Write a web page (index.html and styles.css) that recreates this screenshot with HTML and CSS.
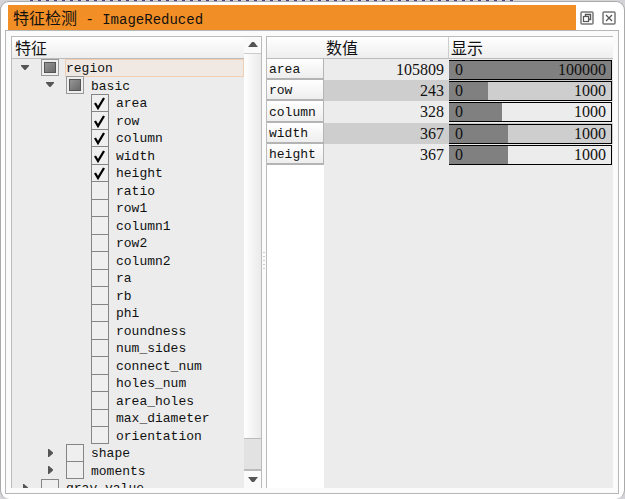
FILE: index.html
```html
<!DOCTYPE html>
<html lang="zh-CN">
<head>
<meta charset="utf-8">
<title>特征检测 - ImageReduced</title>
<link rel="stylesheet" href="styles.css">
</head>
<body>
<section class="window">
  <header class="titlebar">
    <h1 class="title"><span class="cjk">特征检测</span> - ImageReduced</h1>
    <div class="window-buttons">
      <button type="button" class="window-button" aria-label="Float"><svg viewBox="0 0 14 14"><rect x="1" y="1" width="12" height="12" rx="1" fill="#fff" stroke="#777" stroke-width="1.5"/><path d="M5.500 5V3.500h5v5H9" fill="none" stroke="#555" stroke-width="1.4"/><rect x="3.500" y="5.500" width="5" height="5" fill="#fff" stroke="#555" stroke-width="1.2"/></svg></button>
      <button type="button" class="window-button" aria-label="Close"><svg viewBox="0 0 14 14"><rect x="1" y="1" width="12" height="12" rx="1" fill="#fff" stroke="#777" stroke-width="1.5"/><path d="M4 4l6 6M10 4l-6 6" stroke="#555" stroke-width="1.3"/></svg></button>
    </div>
  </header>
  <main class="content">
    <section class="features">
      <div class="tree-pane">
        <h2 class="head">特征</h2>
        <ul class="tree" id="tree"></ul>
      </div>
      <div class="scrollbar">
        <button type="button" class="scroll-button" aria-label="Scroll up"><svg viewBox="0 0 10 6"><path d="M0 5L4 0h2l4 5z" fill="#555"/></svg></button>
        <div class="track"><div class="thumb"></div></div>
        <button type="button" class="scroll-button down" aria-label="Scroll down"><svg viewBox="0 0 10 6"><path d="M0 0h10L6 5H4z" fill="#555"/></svg></button>
      </div>
    </section>
    <div class="splitter"></div>
    <section class="values">
      <table>
        <colgroup><col class="col-name"><col class="col-value"><col></colgroup>
        <thead><tr><th></th><th scope="col">数值</th><th scope="col">显示</th></tr></thead>
        <tbody id="values"></tbody>
      </table>
    </section>
  </main>
</section>
<script src="script.js"></script>
</body>
</html>
```
FILE: styles.css
```css
* { box-sizing: border-box; }
body {
  margin: 0;
  height: 100vh;
  padding-top: 1px;
  background:
    repeating-linear-gradient(90deg, #44448c 0 3px, #d4d4d8 3px 8px) 30px 0 / 78% 1px no-repeat,
    #d4d4d8;
  color: #111;
  font: 13px/17px "Liberation Mono", "Noto Sans CJK SC", monospace;
  overflow: hidden;
}
h1, h2, ul { margin: 0; padding: 0; font-weight: normal; }
button { padding: 0; border: 0; background: none; }
svg { display: block; }
.window {
  display: flex;
  flex-direction: column;
  height: 100%;
  padding: 3px 5px 5px 4px;
  border: 1px solid #aaa;
  border-bottom: 0;
  border-radius: 9px;
  background: #fff;
}
.titlebar { display: flex; height: 25px; padding-left: 3px; }
.title {
  flex: 1;
  padding-left: 5px;
  background: #f28e26;
  font-size: 14px;
  line-height: 25px;
  white-space: pre;
}
.cjk { font-size: 16px; font-family: "Noto Sans CJK SC", sans-serif; }
.window-buttons {
  display: flex;
  align-items: center;
  gap: 8px;
  padding: 0 3px 0 4px;
}
.window-button { width: 14px; height: 14px; }
.content {
  display: flex;
  flex: 1;
  min-height: 0;
  padding: 5px;
  border: 1px solid #b4b8ba;
  background: #fbfbfb;
}
.features {
  display: flex;
  flex: 0 0 251px;
  border: 1px solid #bbb;
  border-bottom: 0;
  background: #ececec;
}
.tree-pane { display: flex; flex: 1; flex-direction: column; min-width: 0; }
.head, thead th {
  height: 22px;
  border-bottom: 1px solid #bbb;
  background: linear-gradient(#fff, #eee);
  font: 16px/21px "Noto Sans CJK SC", sans-serif;
  text-align: left;
}
.head { flex: none; padding-left: 3px; }
.tree { flex: 1; min-height: 0; list-style: none; overflow: hidden; }
.item {
  display: flex;
  align-items: center;
  height: 17px;
  padding-left: 5px;
}
.item:nth-child(even) { height: 18px; }
.level-1 { padding-left: 30px; }
.level-2 { padding-left: 55px; }
.arrow { display: grid; place-items: center; width: 16px; margin-right: 8px; }
.arrow svg { width: 8px; height: 8px; }
.check {
  appearance: none;
  flex: none;
  align-self: stretch;
  width: 18px;
  margin: 0 6px 0 0;
  border: 1px solid #858585;
  border-bottom-width: 0;
  background: #efefef center / 12px 14px no-repeat;
}
.check.last { border-bottom-width: 1px; }
.check:checked { background-image: url('data:image/svg+xml,<svg xmlns="http://www.w3.org/2000/svg" viewBox="0 0 12 14"><path d="M1 7l3 5L10 2" fill="none" stroke="black" stroke-width="2.3"/></svg>'); }
.check:indeterminate {
  border: 1px solid #999;
  background: linear-gradient(135deg, #999, #666) content-box, #eee;
  padding: 2px;
  box-shadow: inset 0 0 0 2px #eee, inset 0 0 0 3px #555;
}
.label { flex: 1; padding: 2px 0 0 1px; line-height: 17px; }
.selected { padding: 1px 0 0; border: 1px solid #f1cfb5; background: #f0e8e3; line-height: 15px; }
.scrollbar {
  display: flex;
  flex-direction: column;
  width: 17px;
  background: #fafafa;
}
.scroll-button { display: grid; place-items: center; height: 17px; border-bottom: 1px solid #ccc; }
.scroll-button.down { border: 0; }
.scroll-button svg { width: 10px; height: 6px; }
.track {
  display: flex;
  flex: 1;
  flex-direction: column;
  justify-content: flex-end;
  background: linear-gradient(90deg, #fff, #eaeaea);
}
.thumb { height: 8%; border: 1px solid #bbb; border-width: 1px 0 2px; background: #e2e2e2; }
.splitter {
  width: 4px;
  background: repeating-linear-gradient(#ccc 0 1px, transparent 1px 4px) center / 2px 20px no-repeat;
}
.values {
  flex: 1;
  border: solid #bbb;
  border-width: 1px 0 0 1px;
  background: linear-gradient(90deg, #fff 57px, #ececec 57px);
}
table { width: 100%; table-layout: fixed; border-collapse: separate; border-spacing: 0; }
.col-name { width: 57px; }
.col-value { width: 124px; }
th, td { padding: 0; }
thead th { padding-left: 2px; }
thead th:last-child { border-left: 1px solid #ccc; }
tbody tr { height: 21px; }
tbody tr:nth-child(3n) { height: 22px; }
tbody tr:nth-child(even) td { background: #cecece; }
tbody th {
  padding: 2px 0 0 2px;
  border: solid #b4b4b4;
  border-width: 0 1px 2px 0;
  background: linear-gradient(#fff, #eee);
  font-weight: normal;
  text-align: left;
}
.number, .bar { font: 16px/18px "Liberation Serif", serif; }
.number { padding-right: 4px; text-align: right; }
.bar {
  display: flex;
  justify-content: space-between;
  height: 20px;
  margin: 0 1px;
  padding: 0 5px 0 6px;
  border: solid #000;
  border-width: 1px 1px 1px 0;
  background: linear-gradient(#808080, #808080) no-repeat;
}
```
FILE: script.js
```js
const DOWN = '<svg viewBox="0 0 8 8"><path d="M0 1h8v1L4.500 6h-1L0 2z" fill="#555"/></svg>';
const RIGHT = '<svg viewBox="0 0 8 8"><path d="M2 0h1l4 3.500v1L3 8H2z" fill="#555"/></svg>';
const checked = ["area", "row", "column", "width", "height"];
const leaves = [...checked, "ratio", "row1", "column1", "row2", "column2", "ra", "rb", "phi",
  "roundness", "num_sides", "connect_num", "holes_num", "area_holes", "max_diameter", "orientation"];
const items = [
  { name: "region", level: 0, open: true },
  { name: "basic", level: 1, open: true },
  ...leaves.map(name => ({ name, level: 2 })),
  { name: "shape", level: 1 },
  { name: "moments", level: 1 },
  { name: "gray_value", level: 0 }
];
document.getElementById("tree").innerHTML = items.map((item, i) => {
  const next = items[i + 1];
  const last = !next || next.level !== item.level ? " last" : "";
  const arrow = item.level === 2 ? "" : item.open ? DOWN : RIGHT;
  return `<li class="item level-${item.level}"><span class="arrow">${arrow}</span>
    <input type="checkbox" class="check${last}" id="f-${item.name}"${checked.includes(item.name) ? " checked" : ""}>
    <label class="label${i === 0 ? " selected" : ""}" for="f-${item.name}">${item.name}</label></li>`;
}).join("");
for (const name of ["region", "basic"]) document.getElementById("f-" + name).indeterminate = true;

const values = [["area", 105809, 100000], ["row", 243, 1000], ["column", 328, 1000], ["width", 367, 1000], ["height", 367, 1000]];
document.getElementById("values").innerHTML = values.map(([name, value, max]) =>
  `<tr><th scope="row">${name}</th><td class="number">${value}</td><td><div class="bar" style="background-size:${Math.min(100, value / max * 100)}% 100%"><span>0</span><span>${max}</span></div></td></tr>`).join("");
```
